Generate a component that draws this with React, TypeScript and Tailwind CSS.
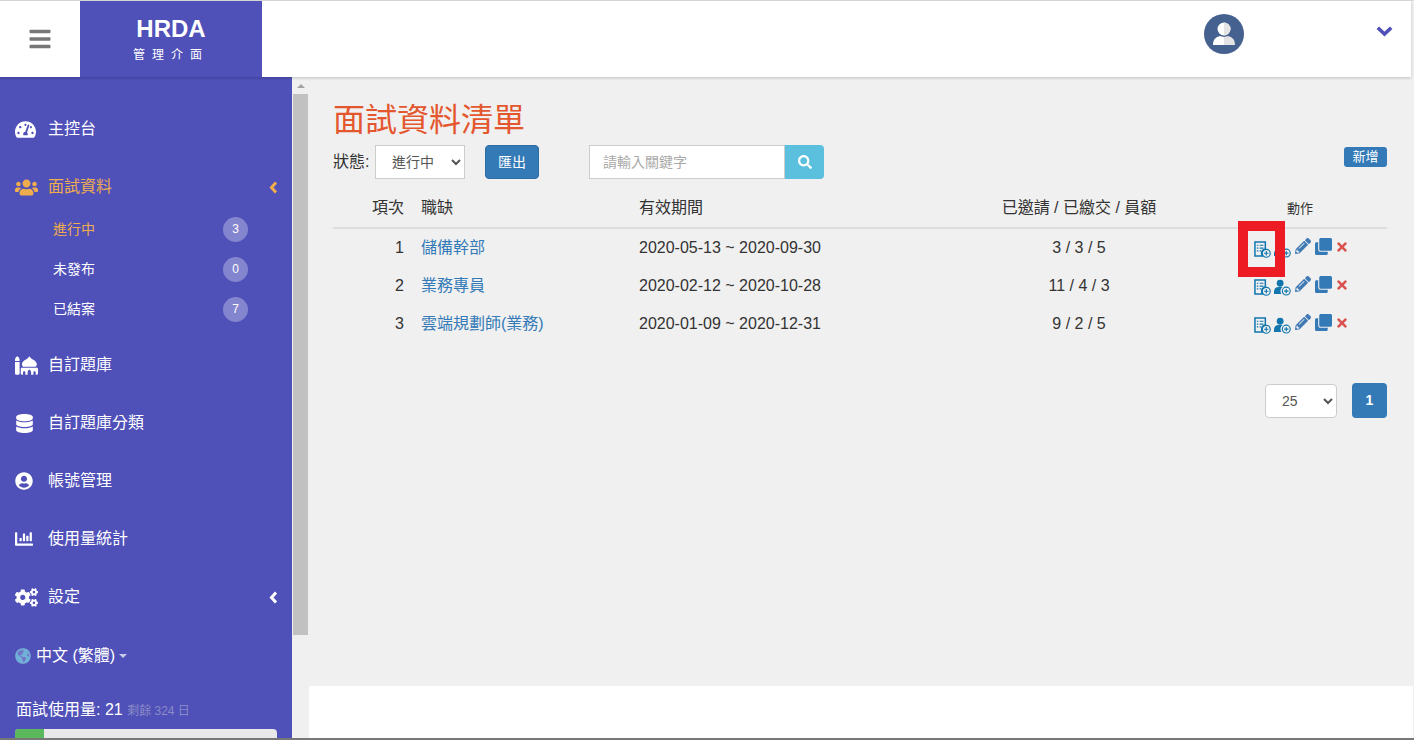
import type { ReactNode } from 'react'
import {
  FaBars,
  FaChartBar,
  FaClone,
  FaCogs,
  FaDatabase,
  FaGlobeAmericas,
  FaMosque,
  FaPencilAlt,
  FaSearch,
  FaTachometerAlt,
  FaTimes,
  FaUserCircle,
  FaUsers,
} from 'react-icons/fa'

const FONT = "font-['Liberation_Sans','Noto_Sans_CJK_TC',sans-serif]"

const jobs = [
  { no: 1, title: '儲備幹部', period: '2020-05-13 ~ 2020-09-30', count: '3 / 3 / 5' },
  { no: 2, title: '業務專員', period: '2020-02-12 ~ 2020-10-28', count: '11 / 4 / 3' },
  { no: 3, title: '雲端規劃師(業務)', period: '2020-01-09 ~ 2020-12-31', count: '9 / 2 / 5' },
]

function NavItem({ icon, label, active, caret }: { icon: ReactNode; label: string; active?: boolean; caret?: boolean }) {
  return (
    <div className={`flex h-[58px] shrink-0 items-center pl-[15px] pr-[14px] text-[16px] ${active ? 'text-[#f0ad4e]' : 'text-white'}`}>
      <span className="flex w-[33px] shrink-0 items-center">{icon}</span>
      <span className="flex-1">{label}</span>
      {caret && (
        <svg viewBox="0 0 9 13" className="h-[13px] w-[9px]">
          <path d="M7 1.500 2.500 6.500 7 11.500" fill="none" stroke="currentColor" strokeWidth="3" />
        </svg>
      )}
    </div>
  )
}

function SubItem({ label, count, active }: { label: string; count: number; active?: boolean }) {
  return (
    <div className={`flex h-[40px] items-center pl-[53px] pr-[44px] text-[14px] ${active ? 'text-[#f0ad4e]' : 'text-white'}`}>
      <span className="flex-1">{label}</span>
      <span className="flex h-[25px] w-[25px] items-center justify-center rounded-full bg-[#8485cf] text-[12px] text-white">{count}</span>
    </div>
  )
}

function DocPlus() {
  return (
    <svg viewBox="0 0 18 18" className="mt-[3px] h-[17px] w-[17px] shrink-0">
      <path d="M1 1h11v7.200a5 5 0 0 0-3 7.800H1z" fill="none" stroke="#1176ae" strokeWidth="1.6" />
      <path d="M3 4.500h1.600M6 4.500h4M3 7.500h1.600M6 7.500h4M3 10.500h1.600M6 10.500h2" stroke="#1176ae" strokeWidth="1.3" />
      <circle cx="13" cy="13" r="4.200" fill="none" stroke="#1176ae" strokeWidth="1.2" />
      <path d="M13 10.700v4.600M10.700 13h4.600" stroke="#1176ae" strokeWidth="1.2" />
    </svg>
  )
}

function UserPlus() {
  return (
    <svg viewBox="0 0 18 18" className="ml-[3px] mt-[3px] h-[17px] w-[17px] shrink-0">
      <circle cx="6.500" cy="4.500" r="3.600" fill="#1176ae" />
      <path d="M0 16v-3a5 5 0 0 1 5-4.500h4a5.500 5.500 0 0 0-1.200 7.500z" fill="#1176ae" />
      <circle cx="13" cy="12.800" r="4.200" fill="none" stroke="#1176ae" strokeWidth="1.2" />
      <path d="M13 10.500v4.600M10.700 12.800h4.600" stroke="#1176ae" strokeWidth="1.2" />
    </svg>
  )
}

export default function App() {
  return (
    <div className={`${FONT} relative flex h-[740px] w-[1414px] flex-col overflow-hidden bg-[#f0f0f0] text-[#333]`}>
      <div className="h-px shrink-0 bg-[#dcdcdc]" />

      {/* top bar */}
      <header className="z-10 mr-[3px] flex h-[76px] shrink-0 bg-white shadow-[0_1px_3px_rgba(0,0,0,0.2)]">
        <div className="flex w-[80px] items-center justify-center text-[24px] text-[#777]">
          <FaBars />
        </div>
        <div className="flex w-[182px] flex-col items-center bg-[#4f50b8] pt-[14px] text-white">
          <span className="text-[24px] font-bold leading-[28px]">HRDA</span>
          <span className="mt-[4px] text-[12px] leading-[16px] tracking-[7px]">管理介面</span>
        </div>
        <div className="flex flex-1 items-start justify-end">
          <div className="mt-[13px] flex h-[40px] w-[40px] items-center justify-center overflow-hidden rounded-full bg-[#45618f]">
            <svg viewBox="0 0 40 40" className="h-[40px] w-[40px]">
              <circle cx="20" cy="15" r="6.500" fill="#fff" />
              <path d="M9 31c0-6 3-8 7-9 1 0 3 1 4 1v8z" fill="#fff" />
              <path d="M31 31c0-6-3-8-7-9-1 0-3 1-4 1v8z" fill="#e4e4e4" />
              <path d="M20 8.500a6.500 6.500 0 0 1 0 13z" fill="#e4e4e4" />
            </svg>
          </div>
          <svg viewBox="0 0 17 11" className="ml-[132px] mr-[18px] mt-[25px] h-[11px] w-[17px]">
            <path d="M1.800 1.800 8.500 8 15.200 1.800" fill="none" stroke="#4f50b8" strokeWidth="3.600" />
          </svg>
        </div>
      </header>

      <div className="flex min-h-0 flex-1">
        {/* sidebar */}
        <aside className="flex w-[292px] shrink-0 flex-col overflow-hidden bg-[#4f50b8] pt-[23px] text-white">
          <NavItem icon={<FaTachometerAlt className="text-[21px]" />} label="主控台" />
          <NavItem icon={<FaUsers className="text-[23px]" />} label="面試資料" active caret />
          <div className="-mt-[7px] mb-[7px] shrink-0">
            <SubItem label="進行中" count={3} active />
            <SubItem label="未發布" count={0} />
            <SubItem label="已結案" count={7} />
          </div>
          <NavItem icon={<FaMosque className="text-[23px]" />} label="自訂題庫" />
          <NavItem icon={<FaDatabase className="text-[19px]" />} label="自訂題庫分類" />
          <NavItem icon={<FaUserCircle className="text-[18px]" />} label="帳號管理" />
          <NavItem icon={<FaChartBar className="text-[18px]" />} label="使用量統計" />
          <NavItem icon={<FaCogs className="text-[23px]" />} label="設定" caret />
          <div className="mt-[18px] flex h-[24px] shrink-0 items-center pl-[15px] text-[16px] leading-[24px]">
            <FaGlobeAmericas className="mr-[5px] rounded-full bg-white/20 text-[16px] text-[#6fb1d8]" />
            <span>中文 (繁體)</span>
            <span className="ml-[4px] h-0 w-0 border-x-[4px] border-t-[4px] border-x-transparent border-t-white/70" />
          </div>
          <div className="mt-[32px] h-[20px] shrink-0 pl-[16px] text-[16px] leading-[20px]">
            面試使用量: 21 <span className="text-[12px] text-[#8a8bc6]">剩餘 324 日</span>
          </div>
          <div className="ml-[15px] mt-[9px] h-[12px] w-[262px] shrink-0 overflow-hidden rounded-t-[4px] bg-[#e8e8e8]">
            <div className="h-full w-[29px] bg-[#5cb85c]" />
          </div>
        </aside>

        {/* scrollbar */}
        <div className="w-[17px] shrink-0 pl-px pr-px">
          <div className="flex h-[17px] items-center justify-center">
            <span className="h-0 w-0 border-x-[4px] border-b-[4px] border-x-transparent border-b-[#a3a3a3]" />
          </div>
          <div className="h-[541px] bg-[#c1c1c1]" />
        </div>

        {/* main */}
        <main className="flex min-w-0 flex-1 flex-col">
          <div className="flex-1 pl-[24px] pr-[27px] pt-[23px]">
            <h1 className="text-[32px] leading-[40px] text-[#e4572e]">面試資料清單</h1>

            <div className="mt-[5px] flex h-[34px] items-center text-[14px]">
              <span className="w-[42px] text-[16px]">狀態:</span>
              <select defaultValue="進行中" className="h-[34px] w-[90px] border border-[#ccc] bg-white pl-[12px] text-[14px] text-[#555]">
                <option>進行中</option>
              </select>
              <button className="ml-[20px] h-[34px] w-[54px] rounded-[4px] border border-[#2e6da4] bg-[#337ab7] text-[14px] text-white">匯出</button>
              <div className="ml-[50px] flex h-[34px] w-[235px]">
                <input placeholder="請輸入關鍵字" className="h-full w-[196px] border border-[#ccc] bg-white px-[13px] text-[14px] placeholder:text-[#aaa]" />
                <button className="flex h-full w-[39px] items-center justify-center rounded-r-[4px] bg-[#5bc0de] text-[14px] text-white">
                  <FaSearch />
                </button>
              </div>
              <button className="ml-auto mt-[2px] h-[20px] w-[43px] self-start rounded-[3px] bg-[#337ab7] text-[13px] leading-[20px] text-white">新增</button>
            </div>

            <table className="mt-[8px] w-full table-fixed border-collapse text-[16px]">
              <colgroup>
                <col className="w-[71px]" />
                <col className="w-[17px]" />
                <col className="w-[218px]" />
                <col className="w-[306px]" />
                <col className="w-[268px]" />
                <col />
              </colgroup>
              <thead>
                <tr className="h-[41px] border-b-2 border-[#ddd]">
                  <th className="pt-[2px] text-right font-normal">項次</th>
                  <th />
                  <th className="pt-[2px] text-left font-normal">職缺</th>
                  <th className="pt-[2px] text-left font-normal">有效期間</th>
                  <th className="pt-[2px] text-center font-normal">已邀請 / 已繳交 / 員額</th>
                  <th className="pt-[3px] text-center text-[13px] font-normal">動作</th>
                </tr>
              </thead>
              <tbody>
                {jobs.map((job) => (
                  <tr key={job.no} className="h-[38px]">
                    <td className="pt-px text-right">{job.no}</td>
                    <td />
                    <td className="pt-px text-[#337ab7]">{job.title}</td>
                    <td className="pt-px">{job.period}</td>
                    <td className="pt-px text-center">{job.count}</td>
                    <td>
                      <div className="ml-[41px] flex h-[19px] items-start">
                        <DocPlus />
                        <UserPlus />
                        <FaPencilAlt className="ml-[4px] shrink-0 text-[16px] text-[#3f7ab5]" />
                        <FaClone className="ml-[4px] shrink-0 text-[17px] text-[#337ab7]" />
                        <FaTimes className="ml-[3px] mt-[2px] shrink-0 text-[14px] text-[#d9534f]" />
                      </div>
                    </td>
                  </tr>
                ))}
              </tbody>
            </table>

            <div className="mt-[41px] flex justify-end gap-[15px]">
              <select defaultValue="25" className="mt-[1px] h-[34px] w-[72px] rounded-[4px] border border-[#ccc] bg-white pl-[12px] text-[14px] text-[#555]">
                <option>25</option>
              </select>
              <div className="flex h-[35px] w-[35px] items-center justify-center rounded-[4px] bg-[#337ab7] text-[14px] font-bold text-white">1</div>
            </div>
          </div>
          <div className="mr-[1px] h-[52px] shrink-0 bg-white" />
        </main>
      </div>

      <div className="h-[2px] shrink-0 bg-[#777]" />

      {/* red highlight drawn over the first row's action icon */}
      <div className="absolute left-[1238px] top-[221px] h-[56px] w-[47px] border-[10px] border-[#ed1c24]" />
    </div>
  )
}
